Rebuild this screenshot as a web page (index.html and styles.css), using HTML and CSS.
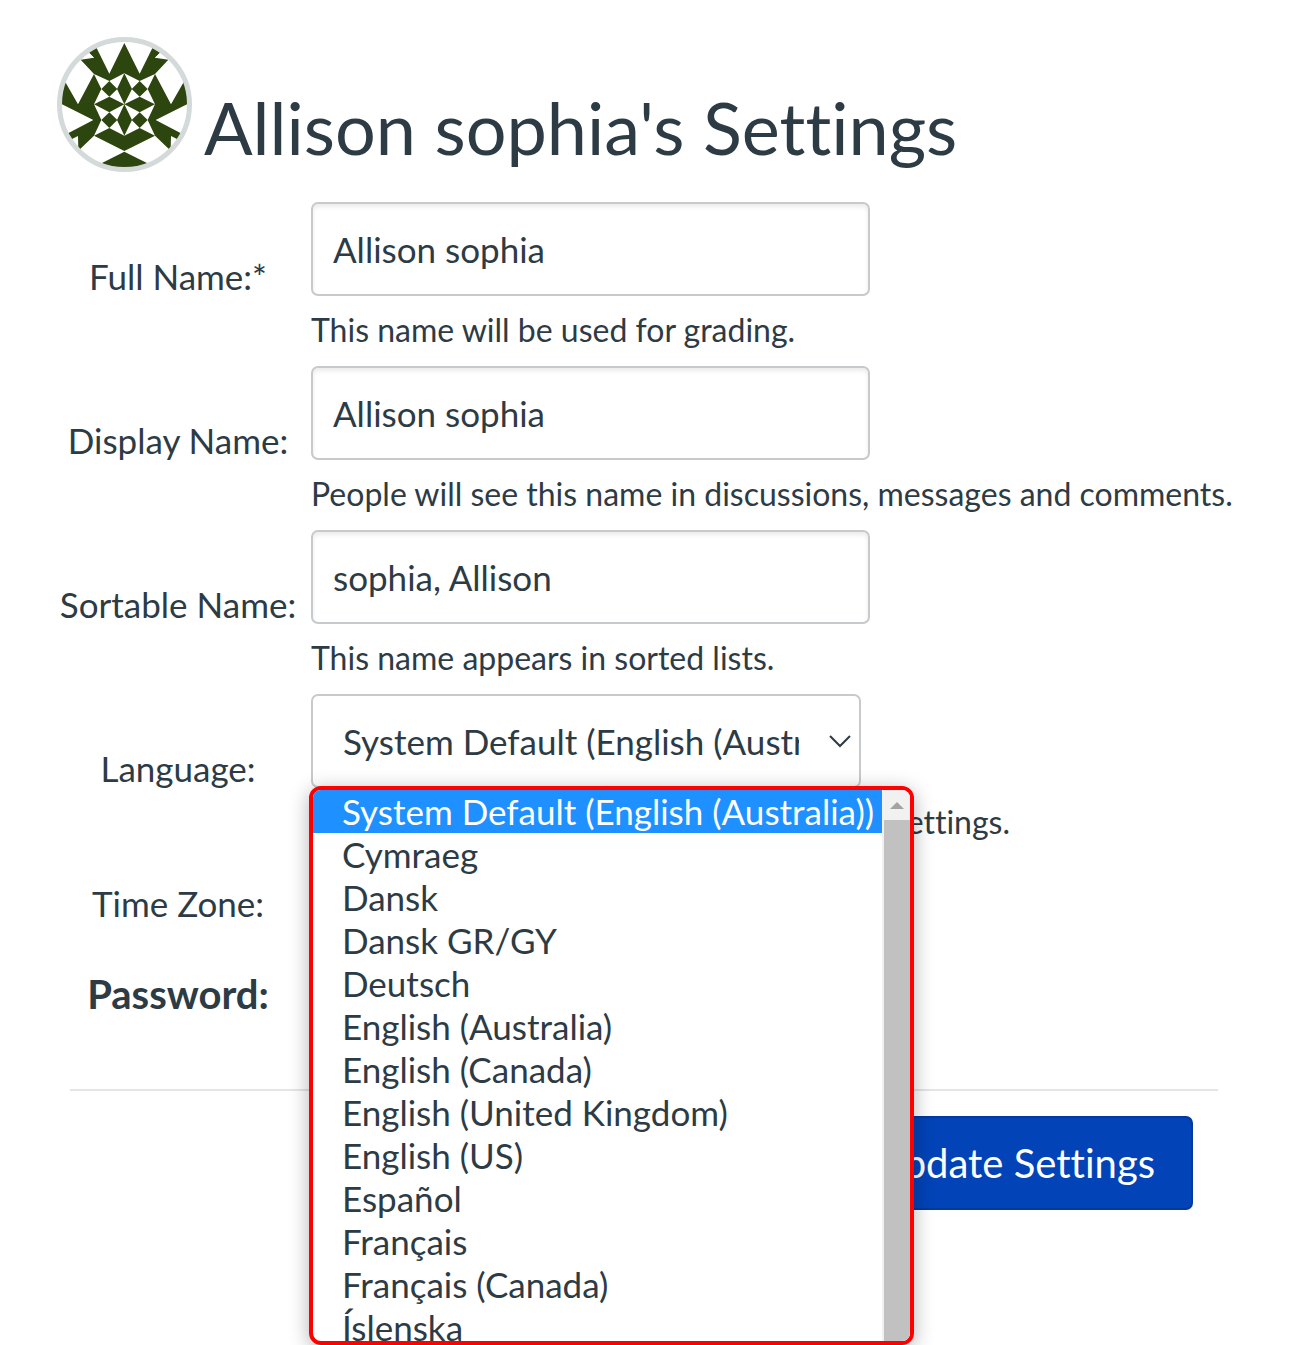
FILE: index.html
```html
<!DOCTYPE html>
<html lang="en">
<head>
    <meta charset="UTF-8">
    <meta name="viewport" content="width=device-width, initial-scale=1.0">
    <title>Allison sophia's Settings</title>
    <link rel="stylesheet" href="styles.css">
</head>
<body>
    <div class="container">
        <div class="profile-header">
            <svg class="avatar" viewBox="21 21 405 405" aria-hidden="true">
                <defs>
                    <clipPath id="avatarClip"><circle cx="223.5" cy="223.5" r="190"/></clipPath>
                </defs>
                <circle cx="223.5" cy="223.5" r="195" fill="#fff"/>
                <g fill="#2d4610" clip-path="url(#avatarClip)">
                    <!-- top crown -->
                    <path d="M92 89L132 83L116 68L110 62L138 50L178 131L223 39L269 131L309 50L338 62L331 68L315 83L355 89L315 132L269 153L223 130L178 153L132 132Z"/>
                    <!-- side wings -->
                    <path d="M30 220L30 128L84 223L132 132L154 177L132 223L154 270L132 317L85 362L84 318L66 327L50 312L130 270Z"/>
                    <path d="M417 220L417 128L363 223L315 132L293 177L315 223L293 270L315 317L362 362L363 318L381 327L397 312L317 270Z"/>
                    <!-- bottom -->
                    <path d="M132 317L178 294L223 317L269 294L315 317L223 363Z"/>
                    <path d="M223 365L315 411L223 420L132 411Z"/>
                    <!-- star and small diamonds in the middle -->
                    <path d="M223 130L246 177L223 223L201 177ZM223 317L246 270L223 223L201 270ZM132 223L178 200L223 223L178 247ZM315 223L269 200L223 223L269 247Z"/>
                    <path d="M178 153L202 177L178 200L154 177ZM269 153L293 177L269 200L245 177ZM178 247L202 270L178 294L154 270ZM269 247L293 270L269 294L245 270Z"/>
                </g>
                <g fill="#fff">
                    <path d="M90 84L132 83L116 67Z"/>
                    <path d="M357 84L315 83L331 67Z"/>
                </g>
                <circle cx="223.5" cy="223.5" r="195" fill="none" stroke="#d3dad9" stroke-width="15"/>
            </svg>
            <h1>Allison sophia's Settings</h1>
        </div>

        <form action="#" method="POST" id="settingsForm">
            <div class="row">
                <label for="fullName">Full Name:*</label>
                <div class="field">
                    <input type="text" id="fullName" name="fullName" value="Allison sophia" required>
                    <div class="hint">This name will be used for grading.</div>
                </div>
            </div>
            <div class="row">
                <label for="displayName">Display Name:</label>
                <div class="field">
                    <input type="text" id="displayName" name="displayName" value="Allison sophia">
                    <div class="hint">People will see this name in discussions, messages and comments.</div>
                </div>
            </div>
            <div class="row">
                <label for="sortableName">Sortable Name:</label>
                <div class="field">
                    <input type="text" id="sortableName" name="sortableName" value="sophia, Allison">
                    <div class="hint">This name appears in sorted lists.</div>
                </div>
            </div>
            <div class="row">
                <label for="language">Language:</label>
                <div class="field">
                    <div class="select-box">
                        <select id="language" name="language">
                            <option>System Default (English (Australia))</option>
                        </select>
                        <svg class="arrow" viewBox="0 0 22 13" aria-hidden="true"><path d="M1 1L11 11L21 1" fill="none" stroke="#2d3b45" stroke-width="2"/></svg>
                        <div class="menu">
                            <ul class="options" role="listbox" aria-label="Language">
                                <li class="selected" role="option" aria-selected="true">System Default (English (Australia))</li>
                                <li role="option">Cymraeg</li>
                                <li role="option">Dansk</li>
                                <li role="option">Dansk GR/GY</li>
                                <li role="option">Deutsch</li>
                                <li role="option">English (Australia)</li>
                                <li role="option">English (Canada)</li>
                                <li role="option">English (United Kingdom)</li>
                                <li role="option">English (US)</li>
                                <li role="option">Español</li>
                                <li role="option">Français</li>
                                <li role="option">Français (Canada)</li>
                                <li role="option">Íslenska</li>
                            </ul>
                            <div class="scrollbar">
                                <svg class="scroll-up" viewBox="0 0 26 30" aria-hidden="true"><path d="M6 19L13 12L20 19Z" fill="#a3a3a3"/></svg>
                                <div class="thumb"></div>
                            </div>
                        </div>
                    </div>
                    <div class="hint">This will override any browser or account settings.</div>
                </div>
            </div>
            <div class="row row-short">
                <label for="timeZone">Time Zone:</label>
                <div class="field">
                    <select id="timeZone" name="timeZone"></select>
                </div>
            </div>
            <div class="row row-password">
                <label for="changePassword">Password:</label>
                <div class="field">
                    <input type="checkbox" id="changePassword" name="changePassword">
                </div>
            </div>
            <div class="form-actions">
                <button type="submit">Update Settings</button>
            </div>
        </form>
    </div>
</body>
</html>
```

FILE: styles.css
```css
* {
    box-sizing: border-box;
}

body {
    font-family: Lato, sans-serif;
    font-size: 35px;
    font-variant-ligatures: none;
    margin: 0;
    min-height: 100vh;
    color: #2d3b45;
    background-color: #fff;
}

.container {
    min-height: 100vh;
    padding: 37px 94px 0 57px;
}

.profile-header {
    display: flex;
    align-items: flex-end;
    gap: 12px;
    margin-bottom: 22px;
}

.avatar {
    width: 135px;
    height: 135px;
    flex: none;
}

h1 {
    margin: 0;
    font-size: 72px;
    font-weight: normal;
    line-height: 90px;
}

.row {
    display: grid;
    grid-template-columns: 242px 1fr;
    column-gap: 12px;
    align-items: center;
    min-height: 164px;
}

.row-short {
    min-height: 106px;
}

.row-password {
    min-height: 76px;
}

label {
    text-align: center;
    line-height: 44px;
    white-space: nowrap;
}

.row-password label {
    font-size: 40px;
    font-weight: bold;
}

.field {
    padding: 7px 0;
}

.row-short .field {
    padding: 6px 0;
}

input[type="text"], select {
    display: block;
    height: 94px;
    border: 2px solid #c7cacc;
    border-radius: 7px;
    background-color: #fff;
    color: #2d3b45;
    font-family: inherit;
    font-size: 35px;
    font-variant-ligatures: none;
}

input[type="text"] {
    width: 559px;
    max-width: 100%;
    padding: 0 20px;
    box-shadow: inset 0 3px 4px rgba(0, 0, 0, 0.08);
}

select {
    width: 550px;
    max-width: 100%;
    padding: 0 60px 0 30px;
    appearance: none;
}

.hint {
    margin-top: 14px;
    font-size: 32px;
    line-height: 40px;
    white-space: nowrap;
}

.select-box {
    position: relative;
    width: 550px;
}

.arrow {
    position: absolute;
    top: 41px;
    right: 10px;
    width: 22px;
    height: 13px;
}

/* open language list, lies over the rest of the form */
.menu {
    position: absolute;
    top: 92px;
    left: -2px;
    z-index: 1;
    display: flex;
    width: 605px;
    height: 559px;
    overflow: hidden;
    border: 4px solid #f00;
    border-radius: 12px;
    background-color: #fff;
    box-shadow: 0 4px 20px rgba(0, 0, 0, 0.3);
}

.options {
    flex: 1;
    min-width: 0;
    margin: 0;
    padding: 0;
    list-style: none;
    white-space: nowrap;
}

.options li {
    height: 43px;
    padding-left: 29px;
    line-height: 43px;
}

.options .selected {
    color: #fff;
    background-color: #1e90ff;
}

.scrollbar {
    display: flex;
    flex: none;
    flex-direction: column;
    width: 28px;
    padding-left: 2px;
    background-color: #f1f1f1;
}

.scroll-up {
    height: 30px;
}

.thumb {
    flex: 1;
    background-color: #c1c1c1;
}

.form-actions {
    display: flex;
    justify-content: flex-end;
    margin: 57px 0 0 13px;
    padding: 25px 25px 0 0;
    border-top: 2px solid #e3e5e6;
}

button {
    height: 94px;
    padding: 0 36px;
    font-family: inherit;
    font-size: 40px;
    font-variant-ligatures: none;
    color: #fff;
    background-color: #0243b8;
    border: 2px solid #0238a0;
    border-radius: 7px;
    cursor: pointer;
}

button:hover {
    background-color: #0238a0;
}
```
